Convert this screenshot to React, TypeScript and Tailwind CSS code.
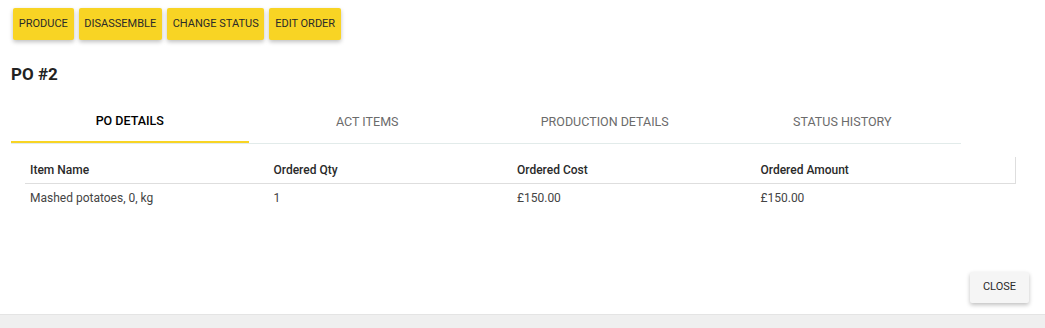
export default function App() {
  const actions = ["PRODUCE", "DISASSEMBLE", "CHANGE STATUS", "EDIT ORDER"];
  const tabs = ["PO DETAILS", "ACT ITEMS", "PRODUCTION DETAILS", "STATUS HISTORY"];
  const cols = ["Item Name", "Ordered Qty", "Ordered Cost", "Ordered Amount"];
  const row = ["Mashed potatoes, 0, kg", "1", "£150.00", "£150.00"];

  return (
    <div className="flex h-[328px] w-[1045px] flex-col bg-white font-['Roboto',sans-serif]">
      <div className="flex flex-1 flex-col">
        <div className="flex gap-[5px] pl-[13px] pt-[8px]">
          {actions.map((a) => (
            <button
              key={a}
              type="button"
              className="h-[32px] rounded-[2px] bg-[#f8d424] px-[5.75px] text-[11px] text-[#2a2a2a] shadow-[0_2px_4px_rgba(0,0,0,0.25)]"
            >
              {a}
            </button>
          ))}
        </div>

        <h2 className="mt-[24px] pl-[11px] text-[17px] font-bold leading-[20px] text-[#222]">PO #2</h2>

        <div className="ml-[11px] mt-[17px] flex w-[950px] border-b border-[#e2ebea]">
          {tabs.map((t, i) => (
            <div
              key={t}
              className={`flex h-[42px] flex-1 items-center justify-center text-[12.5px] ${
                i === 0 ? "-mb-px border-b-2 border-[#f8d424] font-medium text-black" : "text-[#6b6b6b]"
              }`}
            >
              {t}
            </div>
          ))}
        </div>

        <div className="ml-[25px] mt-[13px] w-[991px]">
          <div className="flex h-[27px] items-center border-b border-r border-[#dedede]">
            {cols.map((c) => (
              <div key={c} className="w-[243.5px] pl-[5px] text-[12px] font-medium text-[#2a2a2a]">
                {c}
              </div>
            ))}
          </div>
          <div className="flex h-[27px] items-center">
            {row.map((c, i) => (
              <div key={i} className="w-[243.5px] pl-[5px] text-[12px] text-[#444]">
                {c}
              </div>
            ))}
          </div>
        </div>

        <div className="mt-auto flex justify-end pb-[11px] pr-[16px]">
          <button
            type="button"
            className="h-[31px] w-[59px] rounded-[2px] bg-[#f5f5f5] text-[11px] text-[#2a2a2a] shadow-[0_2px_4px_rgba(0,0,0,0.25)]"
          >
            CLOSE
          </button>
        </div>
      </div>
      <div className="h-[14px] border-t border-[#e4e4e4] bg-[#efefef]" />
    </div>
  );
}
